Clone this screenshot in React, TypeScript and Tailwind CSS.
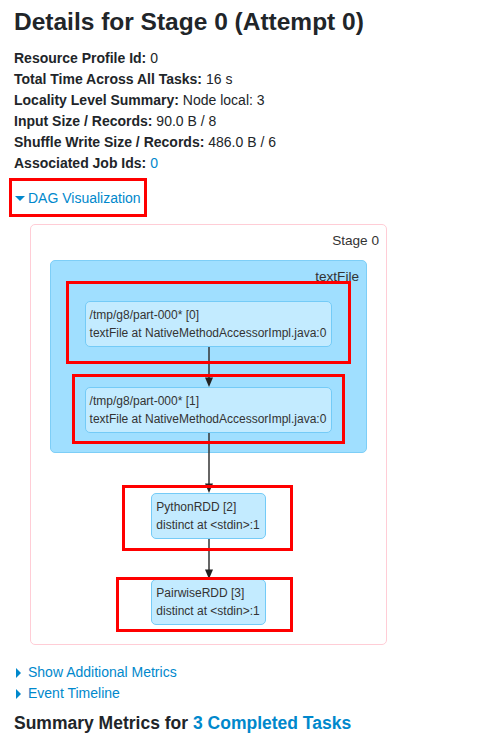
import React from "react";

function Node({ l1, l2 }: { l1: string; l2: string }) {
  return (
    <div className="border border-[#74cbf7] bg-[#c3ebff] rounded-[5px] pl-[4px] pr-[5px] pt-[5px] pb-[4px] text-[12px] leading-[17.5px] text-[#333] whitespace-nowrap">
      <div>{l1}</div>
      <div>{l2}</div>
    </div>
  );
}

function Edge({ extend = 0 }: { extend?: number }) {
  const H = 40 + extend;
  return (
    <div className="relative h-[40px] w-[10px] shrink-0">
      <svg
        className="absolute left-0 bottom-0"
        width={10}
        height={H}
        viewBox={`0 0 10 ${H}`}
      >
        <line x1={5} y1={0} x2={5} y2={H - 8} stroke="#333" strokeWidth={1.5} />
        <polygon points={`1,${H - 9.5} 9,${H - 9.5} 5,${H}`} fill="#222" />
      </svg>
    </div>
  );
}

function RedBox({ className }: { className: string }) {
  return <div className={`absolute border-[3px] border-[#ff0000] pointer-events-none ${className}`} />;
}

export default function App() {
  const info: [string, string, boolean?][] = [
    ["Resource Profile Id:", "0"],
    ["Total Time Across All Tasks:", "16 s"],
    ["Locality Level Summary:", "Node local: 3"],
    ["Input Size / Records:", "90.0 B / 8"],
    ["Shuffle Write Size / Records:", "486.0 B / 6"],
    ["Associated Job Ids:", "0", true],
  ];
  return (
    <div
      className="relative w-[488px] h-[740px] overflow-hidden bg-white text-[#212529] px-[14px] pt-[9px]"
      style={{ fontFamily: '"Liberation Sans", Arial, Helvetica, sans-serif' }}
    >
      <h3 className="text-[24.5px] leading-[26px] font-bold whitespace-nowrap">Details for Stage 0 (Attempt 0)</h3>

      <div className="mt-[13px] text-[14px] leading-[21px]">
        {info.map(([k, v, link]) => (
          <div key={k} className="whitespace-nowrap">
            <span className="font-bold">{k}</span>{" "}
            <span className={link ? "text-[#0088cc]" : ""}>{v}</span>
          </div>
        ))}
      </div>

      <div className="mt-[14px] h-[21px] flex items-center text-[14px] text-[#0088cc]">
        <span className="ml-[1px] w-0 h-0 border-l-[5px] border-r-[5px] border-t-[5px] border-l-transparent border-r-transparent border-t-[#0088cc]" />
        <span className="ml-[3px]">DAG Visualization</span>
      </div>

      <div className="mt-[15px] ml-[16px] w-[357px] border border-[#ffcdd6] rounded-[5px] bg-white pt-[8px] pb-[19px] flex flex-col items-center text-[#333]">
        <div className="self-stretch text-right pr-[7px] text-[13.6px] leading-[16px]">Stage 0</div>
        <div className="mt-[11px] w-[317px] border border-[#7dcef7] bg-[#a0dfff] rounded-[5px] pt-[8px] pb-[19px] flex flex-col items-center">
          <div className="self-stretch text-right pr-[7px] text-[13.6px] leading-[16px]">textFile</div>
          <div className="mt-[16px]">
            <Node l1="/tmp/g8/part-000* [0]" l2="textFile at NativeMethodAccessorImpl.java:0" />
          </div>
          <Edge />
          <Node l1="/tmp/g8/part-000* [1]" l2="textFile at NativeMethodAccessorImpl.java:0" />
        </div>
        <Edge extend={20} />
        <Node l1="PythonRDD [2]" l2="distinct at <stdin>:1" />
        <Edge />
        <Node l1="PairwiseRDD [3]" l2="distinct at <stdin>:1" />
      </div>

      <div className="mt-[17px] text-[14px] leading-[21px] text-[#0088cc]">
        <div className="flex items-center h-[21px]">
          <span className="ml-[2px] w-0 h-0 border-t-[5px] border-b-[5px] border-l-[5px] border-t-transparent border-b-transparent border-l-[#0088cc]" />
          <span className="ml-[7px]">Show Additional Metrics</span>
        </div>
        <div className="flex items-center h-[21px]">
          <span className="ml-[2px] w-0 h-0 border-t-[5px] border-b-[5px] border-l-[5px] border-t-transparent border-b-transparent border-l-[#0088cc]" />
          <span className="ml-[7px]">Event Timeline</span>
        </div>
      </div>

      <h4 className="mt-[9px] text-[17.5px] leading-[21px] font-bold whitespace-nowrap">
        Summary Metrics for <span className="text-[#0088cc]">3 Completed Tasks</span>
      </h4>

      <RedBox className="left-[9px] top-[178px] w-[138px] h-[39px]" />
      <RedBox className="left-[66px] top-[281px] w-[285px] h-[83px]" />
      <RedBox className="left-[72px] top-[374px] w-[273px] h-[70px]" />
      <RedBox className="left-[122px] top-[485px] w-[171px] h-[66px]" />
      <RedBox className="left-[116px] top-[577px] w-[177px] h-[55px]" />
    </div>
  );
}
